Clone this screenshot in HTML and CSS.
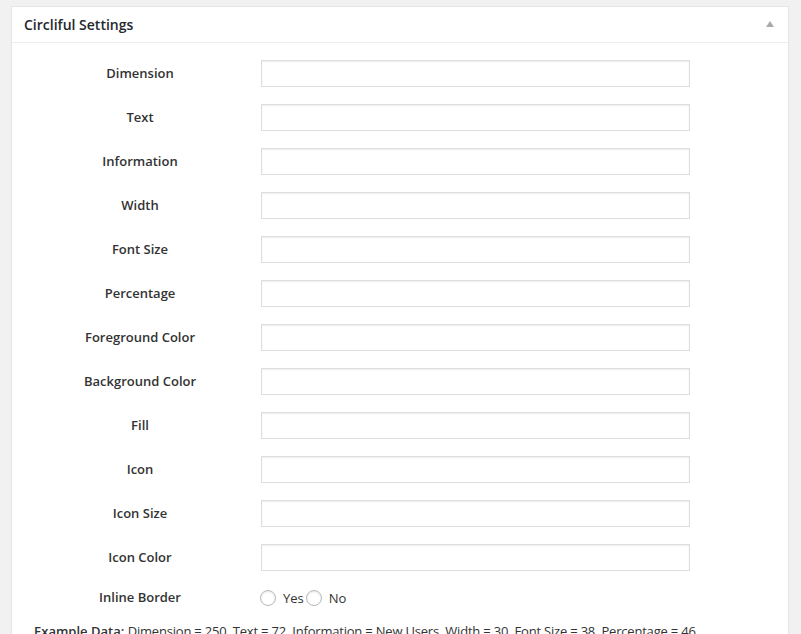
FILE: index.html
```html
<!DOCTYPE html>
<html>
<head>
<meta charset="utf-8">
<link rel="stylesheet" href="styles.css">
</head>
<body>
<div class="postbox">
  <div class="hndle">
    <h2>Circliful Settings</h2>
    <span class="toggle"></span>
  </div>
  <div class="inside">
    <div class="form">
      <label>Dimension</label><input type="text">
      <label>Text</label><input type="text">
      <label>Information</label><input type="text">
      <label>Width</label><input type="text">
      <label>Font Size</label><input type="text">
      <label>Percentage</label><input type="text">
      <label>Foreground Color</label><input type="text">
      <label>Background Color</label><input type="text">
      <label>Fill</label><input type="text">
      <label>Icon</label><input type="text">
      <label>Icon Size</label><input type="text">
      <label>Icon Color</label><input type="text">
      <label class="radio-label">Inline Border</label>
      <div class="radios">
        <span class="radio"></span><span class="opt">Yes</span><span class="radio"></span><span class="opt">No</span>
      </div>
    </div>
    <p class="example"><b>Example Data:</b> <span class="ex-text">Dimension = 250, Text = 72, Information = New Users, Width = 30, Font Size = 38, Percentage = 46</span></p>
  </div>
</div>
</body>
</html>
```
FILE: styles.css
```css
html, body {
  margin: 0;
  padding: 0;
  background: #f1f1f1;
  font-family: "Open Sans", "Noto Sans", sans-serif;
  color: #444;
  overflow: hidden;
  height: 634px;
}
.postbox {
  margin: 6px 0 0 11px;
  width: 776px;
  background: #fff;
  border: 1px solid #e5e5e5;
  box-shadow: 0 1px 1px rgba(0,0,0,0.04);
  min-height: 700px;
}
.hndle {
  height: 35px;
  border-bottom: 1px solid #eee;
  display: flex;
  align-items: center;
  justify-content: space-between;
  padding: 0 14px 0 12px;
}
.hndle h2 {
  margin: 0;
  font-size: 14px;
  font-weight: 600;
  color: #23282d;
}
.toggle {
  width: 0;
  height: 0;
  border-left: 4px solid transparent;
  border-right: 4px solid transparent;
  border-bottom: 6px solid #aaa;
  margin-top: -1px;
}
.inside {
  padding-top: 17px;
}
.form {
  display: grid;
  grid-template-columns: 220px 429px;
  column-gap: 11px;
  row-gap: 17px;
  padding-left: 18px;
  align-items: center;
}
.form label {
  text-align: center;
  font-size: 13px;
  font-weight: 600;
  color: #333;
  line-height: 20px;
  margin-bottom: 2px;
}
.form input {
  height: 27px;
  box-sizing: border-box;
  width: 429px;
  margin: 0;
  border: 1px solid #ddd;
  box-shadow: inset 0 1px 2px rgba(0,0,0,0.07);
  background: #fff;
  outline: none;
}
.form .radio-label {
  margin-top: -1px;
  margin-bottom: 1px;
}
.radios {
  display: flex;
  align-items: center;
  height: 20px;
  margin-top: -1px;
  font-size: 13px;
  color: #333;
}
.radio {
  width: 16px;
  height: 16px;
  box-sizing: border-box;
  border: 1px solid #b4b9be;
  border-radius: 50%;
  box-shadow: inset 0 1px 2px rgba(0,0,0,0.1);
  background: #fff;
  margin-left: -1px;
}
.opt {
  margin-left: 7px;
  margin-right: 3px;
}
.example {
  margin: 13px 0 0 22px;
  font-size: 13px;
  line-height: 20px;
  color: #333;
  white-space: nowrap;
}
.example b {
  font-weight: 600;
}
.ex-text {
  letter-spacing: -0.2px;
}
```
